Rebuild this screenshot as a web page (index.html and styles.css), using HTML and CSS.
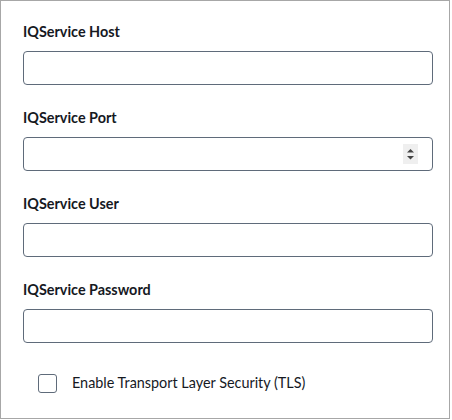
FILE: index.html
```html
<!DOCTYPE html>
<html>
<head>
<meta charset="utf-8">
<link rel="stylesheet" href="styles.css">
</head>
<body>
<div class="panel">
  <div class="field">
    <label class="label" for="host">IQService Host</label>
    <input class="input" id="host" type="text">
  </div>
  <div class="field">
    <label class="label" for="port">IQService Port</label>
    <div class="num-wrap">
      <input class="input" id="port" type="text">
      <span class="spinner">
        <svg width="15" height="20" viewBox="0 0 15 20">
          <path d="M4 8.5 L7.5 5 L11 8.5 Z" fill="#444"/>
          <path d="M4 12 L7.5 15.5 L11 12 Z" fill="#444"/>
        </svg>
      </span>
    </div>
  </div>
  <div class="field">
    <label class="label" for="user">IQService User</label>
    <input class="input" id="user" type="text">
  </div>
  <div class="field">
    <label class="label" for="pw">IQService Password</label>
    <input class="input" id="pw" type="password">
  </div>
  <label class="check">
    <span class="box"></span>
    <span class="check-text">Enable Transport Layer Security (TLS)</span>
  </label>
</div>
</body>
</html>
```
FILE: styles.css
```css
html, body {
  margin: 0;
  padding: 0;
  background: #fff;
}
.panel {
  box-sizing: border-box;
  width: 450px;
  height: 419px;
  border: 1px solid #a7a7a7;
  padding: 21px 17px 0 22px;
  font-family: Lato, "Open Sans", sans-serif;
  color: #16191f;
}
.field {
  display: flex;
  flex-direction: column;
  margin-bottom: 23px;
}
.label {
  font-size: 14.4px;
  font-weight: 700;
  line-height: 20px;
  margin-bottom: 9px;
}
.input {
  box-sizing: border-box;
  height: 34px;
  width: 410px;
  border: 1px solid #5f6b7a;
  border-radius: 4px;
  margin: 0;
  padding: 0 10px;
  font: inherit;
  background: #fff;
}
.num-wrap {
  position: relative;
  width: 410px;
  height: 34px;
}
.spinner {
  position: absolute;
  right: 15px;
  top: 7px;
  width: 15px;
  height: 20px;
  background: #efefef;
  display: flex;
}
.check {
  display: flex;
  align-items: center;
  padding-left: 15px;
  margin-top: 30px;
  height: 20px;
}
.box {
  box-sizing: border-box;
  width: 19px;
  height: 19px;
  border: 1px solid #5f6b7a;
  border-radius: 3px;
  margin-right: 15px;
}
.check-text {
  font-size: 14.4px;
  line-height: 20px;
  color: #16191f;
}
```
